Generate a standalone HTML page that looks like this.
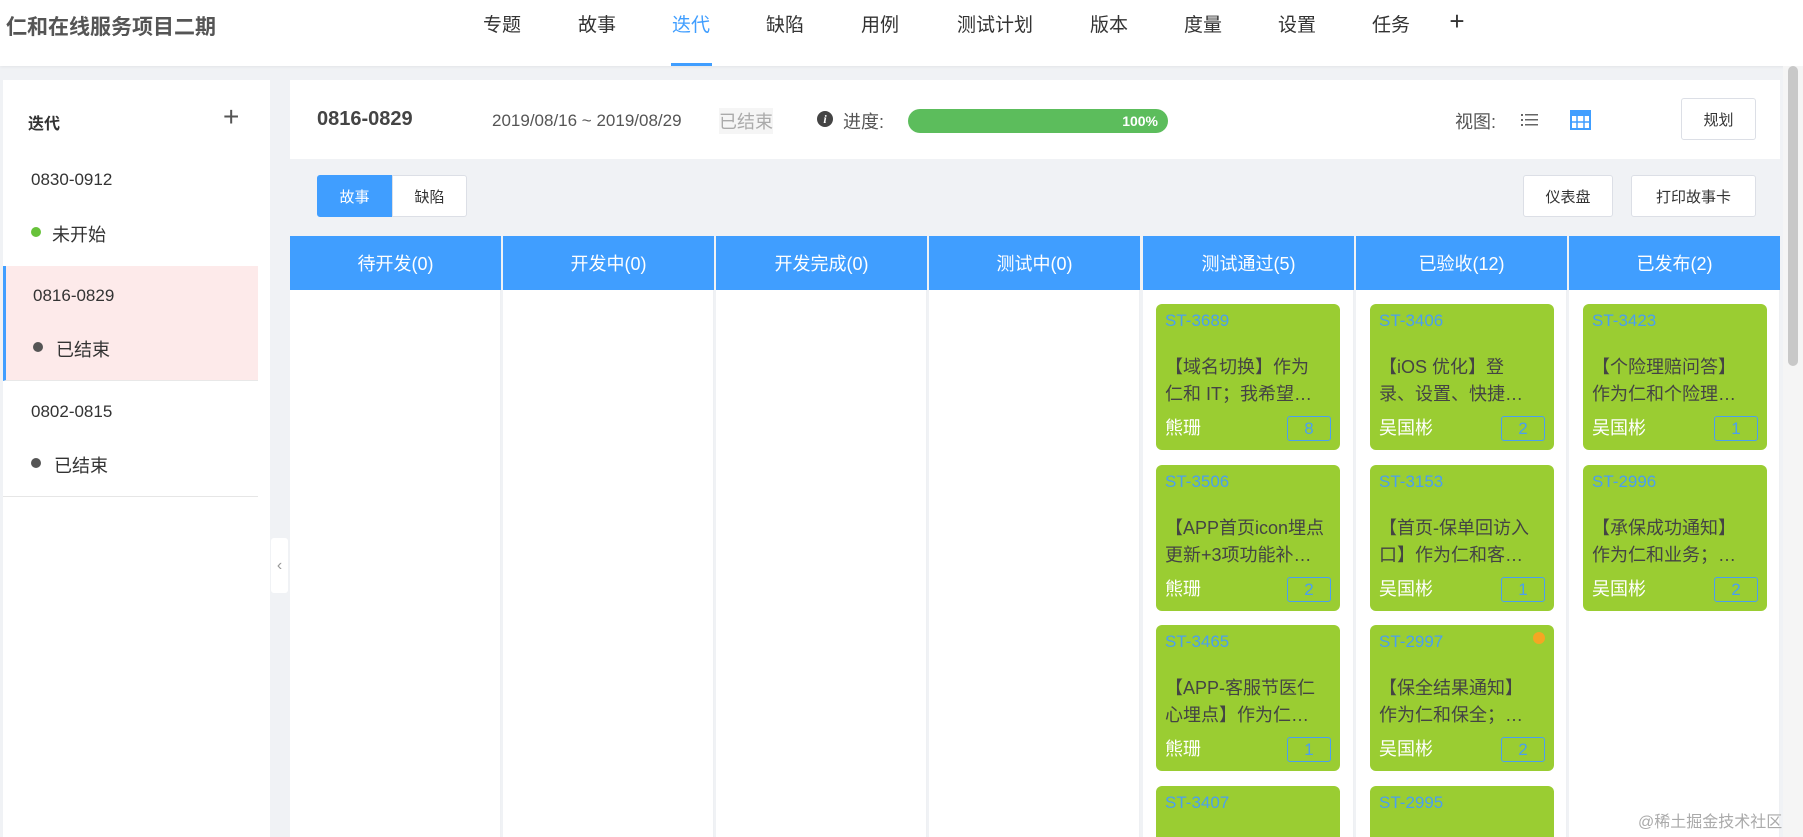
<!DOCTYPE html>
<html style="width:1803px;height:837px;overflow:hidden"><head><meta charset="utf-8"><style>
*{box-sizing:border-box;margin:0;padding:0}
body{width:1803px;height:837px;overflow:hidden;background:#f0f2f5;font-family:"Liberation Sans","Noto Sans CJK SC",sans-serif;color:#333;position:relative}
.abs{position:absolute}
.hdr{left:0;top:0;width:1803px;height:66px;background:#fff;box-shadow:0 1px 3px rgba(0,0,0,.06)}
.title{left:6px;top:11px;font-size:21px;font-weight:bold;color:#555}
.nav{top:10px;font-size:19px;color:#333;transform:translateX(-50%);white-space:nowrap}
.side{left:3px;top:80px;width:267px;height:757px;background:#fff}
.main{left:290px;top:80px;width:1490px;height:79px;background:#fff}
.btn{border:1px solid #dcdfe6;border-radius:3px;background:#fff;font-size:15px;color:#333;display:flex;align-items:center;justify-content:center}
.col{top:236px;height:54px;background:#409eff;color:#fff;font-size:18px;display:flex;align-items:center;justify-content:center;width:211px}
.colb{top:290px;height:547px;background:#fff;width:211px;border-right:1px solid #eef0f3}
.card{width:184px;height:146px;background:#9acd32;border-radius:6px;padding:7px 9px}
.card .id{color:#4a9ff0;font-size:17px;height:26px}
.card .tx{color:#444;font-size:18px;line-height:27px;margin-top:17px;white-space:nowrap;overflow:hidden}
.card .nm{position:absolute;left:9px;bottom:10px;color:#fff;font-size:18px}
.card .bd{position:absolute;right:9px;bottom:9px;width:44px;height:25px;border:1px solid #4a9ff0;border-radius:3px;color:#4a9ff0;font-size:17px;text-align:center;line-height:23px}
#clip{position:absolute;left:0;top:0;width:1803px;height:837px;overflow:hidden}
</style></head><body><div id="clip">
<div class="abs hdr"></div>
<div class="abs title">仁和在线服务项目二期</div>
<div class="abs nav" style="left:502px">专题</div>
<div class="abs nav" style="left:597px">故事</div>
<div class="abs nav" style="left:691px;color:#409eff">迭代</div>
<div class="abs" style="left:671px;top:63px;width:41px;height:3px;background:#409eff"></div>
<div class="abs nav" style="left:785px">缺陷</div>
<div class="abs nav" style="left:880px">用例</div>
<div class="abs nav" style="left:995px">测试计划</div>
<div class="abs nav" style="left:1109px">版本</div>
<div class="abs nav" style="left:1203px">度量</div>
<div class="abs nav" style="left:1297px">设置</div>
<div class="abs nav" style="left:1391px">任务</div>
<div class="abs nav" style="left:1457px;font-size:26px;top:6px;font-weight:300">+</div>

<div class="abs side"></div>
<div class="abs" style="left:28px;top:110px;font-size:16px;font-weight:bold">迭代</div>
<div class="abs" style="left:223px;top:101px;font-size:28px;font-weight:300;color:#555">+</div>
<div class="abs" style="left:31px;top:170px;font-size:17px">0830-0912</div>
<div class="abs" style="left:31px;top:227px;width:10px;height:10px;border-radius:50%;background:#67c23a"></div>
<div class="abs" style="left:52px;top:221px;font-size:18px">未开始</div>
<div class="abs" style="left:3px;top:266px;width:255px;height:115px;background:#fdeaea;border-left:3px solid #409eff;border-bottom:1px solid #e8e8e8"></div>
<div class="abs" style="left:33px;top:286px;font-size:17px">0816-0829</div>
<div class="abs" style="left:33px;top:342px;width:10px;height:10px;border-radius:50%;background:#555"></div>
<div class="abs" style="left:56px;top:336px;font-size:18px">已结束</div>
<div class="abs" style="left:31px;top:402px;font-size:17px">0802-0815</div>
<div class="abs" style="left:31px;top:458px;width:10px;height:10px;border-radius:50%;background:#555"></div>
<div class="abs" style="left:54px;top:452px;font-size:18px">已结束</div>
<div class="abs" style="left:3px;top:496px;width:255px;height:1px;background:#e6e6e6"></div>
<div class="abs" style="left:271px;top:538px;width:17px;height:55px;background:#fff;border-radius:3px;color:#999;font-size:16px;line-height:55px;text-align:center">‹</div>

<div class="abs main"></div>
<div class="abs" style="left:317px;top:108px;font-size:20px;font-weight:bold;color:#444">0816-0829</div>
<div class="abs" style="left:492px;top:111px;font-size:17px;color:#555">2019/08/16 ~ 2019/08/29</div>
<div class="abs" style="left:719px;top:108px;font-size:18px;color:#aaa;background:#f5f5f5">已结束</div>
<div class="abs" style="left:817px;top:111px;width:16px;height:16px;border-radius:50%;background:#444;color:#fff;font-size:12px;font-weight:bold;text-align:center;line-height:16px;font-style:italic;font-family:'Liberation Serif',serif">i</div>
<div class="abs" style="left:843px;top:108px;font-size:18px;color:#555">进度:</div>
<div class="abs" style="left:908px;top:109px;width:260px;height:24px;border-radius:12px;background:#5cbd5c;color:#fff;font-size:14px;font-weight:bold;text-align:right;padding-right:10px;line-height:24px">100%</div>
<div class="abs" style="left:1455px;top:108px;font-size:18px;color:#555">视图:</div>
<svg class="abs" style="left:1521px;top:113px" width="18" height="14"><g fill="#666"><rect x="0" y="1" width="2" height="2"/><rect x="0" y="6" width="2" height="2"/><rect x="0" y="11" width="2" height="2"/><rect x="4" y="1" width="13" height="1.5"/><rect x="4" y="6" width="13" height="1.5"/><rect x="4" y="11" width="13" height="1.5"/></g></svg>
<svg class="abs" style="left:1570px;top:110px" width="21" height="20"><rect x="1" y="1" width="19" height="18" fill="none" stroke="#409eff" stroke-width="2"/><rect x="1" y="1" width="19" height="5" fill="#409eff"/><path d="M7 6V19M14 6V19M1 12H20" stroke="#409eff" stroke-width="1.5"/></svg>
<div class="abs btn" style="left:1681px;top:98px;width:75px;height:42px">规划</div>

<div class="abs btn" style="left:317px;top:175px;width:75px;height:42px;background:#409eff;border-color:#409eff;color:#fff;border-radius:3px 0 0 3px">故事</div>
<div class="abs btn" style="left:392px;top:175px;width:75px;height:42px;border-radius:0 3px 3px 0">缺陷</div>
<div class="abs btn" style="left:1523px;top:175px;width:90px;height:42px">仪表盘</div>
<div class="abs btn" style="left:1631px;top:175px;width:125px;height:42px">打印故事卡</div>

<div class="abs col" style="left:290px">待开发(0)</div>
<div class="abs col" style="left:503px">开发中(0)</div>
<div class="abs col" style="left:716px">开发完成(0)</div>
<div class="abs col" style="left:929px">测试中(0)</div>
<div class="abs col" style="left:1143px">测试通过(5)</div>
<div class="abs col" style="left:1356px">已验收(12)</div>
<div class="abs col" style="left:1569px">已发布(2)</div>
<div class="abs colb" style="left:290px"></div>
<div class="abs colb" style="left:503px"></div>
<div class="abs colb" style="left:716px"></div>
<div class="abs colb" style="left:929px"></div>
<div class="abs colb" style="left:1143px"></div>
<div class="abs colb" style="left:1356px"></div>
<div class="abs colb" style="left:1569px"></div>

<div class="abs card" style="left:1156px;top:304px"><div class="id">ST-3689</div><div class="tx">【域名切换】作为<br>仁和 IT；我希望…</div><div class="nm">熊珊</div><div class="bd">8</div></div>
<div class="abs card" style="left:1156px;top:465px"><div class="id">ST-3506</div><div class="tx">【APP首页icon埋点<br>更新+3项功能补…</div><div class="nm">熊珊</div><div class="bd">2</div></div>
<div class="abs card" style="left:1156px;top:625px"><div class="id">ST-3465</div><div class="tx">【APP-客服节医仁<br>心埋点】作为仁…</div><div class="nm">熊珊</div><div class="bd">1</div></div>
<div class="abs card" style="left:1156px;top:786px;height:51px;border-radius:6px 6px 0 0"><div class="id">ST-3407</div></div>

<div class="abs card" style="left:1370px;top:304px"><div class="id">ST-3406</div><div class="tx">【iOS 优化】登<br>录、设置、快捷…</div><div class="nm">吴国彬</div><div class="bd">2</div></div>
<div class="abs card" style="left:1370px;top:465px"><div class="id">ST-3153</div><div class="tx">【首页-保单回访入<br>口】作为仁和客…</div><div class="nm">吴国彬</div><div class="bd">1</div></div>
<div class="abs card" style="left:1370px;top:625px"><div class="id">ST-2997</div><div class="tx">【保全结果通知】<br>作为仁和保全；…</div><div class="nm">吴国彬</div><div class="bd">2</div></div>
<div class="abs" style="left:1533px;top:632px;width:12px;height:12px;border-radius:50%;background:#f5a623"></div>
<div class="abs card" style="left:1370px;top:786px;height:51px;border-radius:6px 6px 0 0"><div class="id">ST-2995</div></div>

<div class="abs card" style="left:1583px;top:304px"><div class="id">ST-3423</div><div class="tx">【个险理赔问答】<br>作为仁和个险理…</div><div class="nm">吴国彬</div><div class="bd">1</div></div>
<div class="abs card" style="left:1583px;top:465px"><div class="id">ST-2996</div><div class="tx">【承保成功通知】<br>作为仁和业务；…</div><div class="nm">吴国彬</div><div class="bd">2</div></div>

<div class="abs" style="left:1783px;top:66px;width:20px;height:771px;background:#f5f5f5"></div>
<div class="abs" style="left:1788px;top:66px;width:10px;height:300px;background:#c8c8c8;border-radius:5px"></div>
<div class="abs" style="left:1638px;top:808px;font-size:16px;color:#aaa">@稀土掘金技术社区</div>
</div></body></html>
